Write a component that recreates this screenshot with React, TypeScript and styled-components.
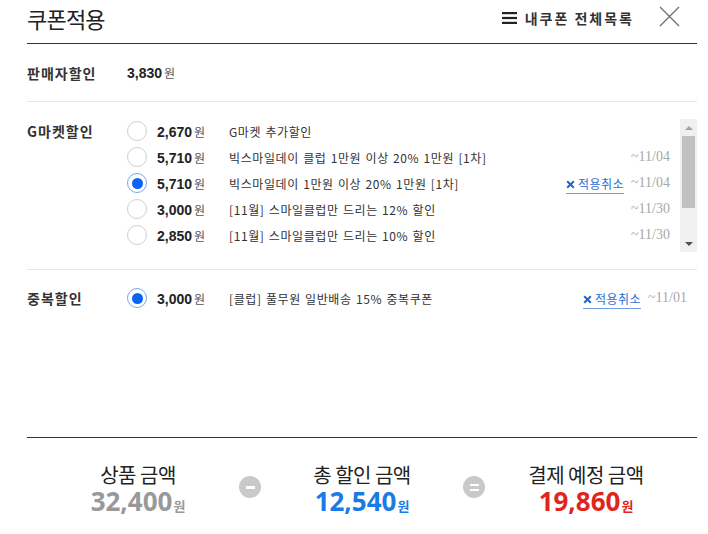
import React from 'react';
import styled, { createGlobalStyle } from 'styled-components';

const GlobalStyle = createGlobalStyle`
  html, body { margin: 0; padding: 0; background: #fff; }
  body { font-family: "Noto Sans CJK KR", "Noto Sans", sans-serif; color: #222; }
  * { box-sizing: border-box; }
`;

const Page = styled.div`
  width: 708px;
  height: 534px;
  padding: 0 11px 0 27px;
  display: flex;
  flex-direction: column;
`;

const Header = styled.header`
  height: 44px;
  padding-bottom: 7px;
  display: flex;
  align-items: center;
  justify-content: space-between;
  border-bottom: 1px solid #333;
`;

const Title = styled.h1`
  margin: 0;
  font-size: 22px;
  font-weight: 400;
  line-height: 36px;
  letter-spacing: -0.8px;
  color: #222;
`;

const HeaderActions = styled.div`
  display: flex;
  align-items: center;
  gap: 25px;
  padding-right: 17px;
`;

const MyCoupons = styled.a`
  display: flex;
  align-items: center;
  gap: 8px;
  font-size: 14px;
  font-weight: 700;
  letter-spacing: 2px;
  line-height: 20px;
  color: #333;
`;

const CloseButton = styled.button`
  border: 0;
  padding: 0;
  background: none;
  display: flex;
  margin-top: -4px;
`;

const Section = styled.section<{ $pad: string; $grow?: boolean; $last?: boolean; $align?: string }>`
  display: flex;
  align-items: ${(p) => p.$align || 'flex-start'};
  padding: ${(p) => p.$pad};
  border-bottom: ${(p) => (p.$last ? 'none' : '1px solid #e8e8e8')};
  flex: ${(p) => (p.$grow ? '1' : 'none')};
`;

const SellerSection = styled(Section)`
  height: 58px;
`;

const Label = styled.div`
  width: 100px;
  flex: none;
  font-size: 14px;
  font-weight: 700;
  letter-spacing: 1px;
  line-height: 26px;
  color: #333;
`;

const Amount = styled.span`
  width: 72px;
  flex: none;
  font-family: "Liberation Sans", Arial, sans-serif;
  font-weight: 700;
  font-size: 14px;
  color: #222;
  white-space: nowrap;
`;

const Won = styled.span`
  font-family: "Noto Sans CJK KR", sans-serif;
  font-weight: 400;
  font-size: 12px;
  color: #555;
  margin-left: 2px;
`;

const ListBox = styled.div`
  flex: 1;
  display: flex;
  align-items: flex-start;
`;

const List = styled.ul`
  flex: 1;
  margin: 0;
  padding: 0;
  list-style: none;
  display: flex;
  flex-direction: column;
`;

const Row = styled.li`
  height: 26px;
  display: flex;
  align-items: center;
  padding-right: 10px;
`;

const Radio = styled.span<{ $checked?: boolean }>`
  width: 20px;
  height: 20px;
  flex: none;
  margin-right: 10px;
  border-radius: 50%;
  border: 1px solid ${(p) => (p.$checked ? '#7aa6ea' : '#cfcfcf')};
  background: #fff;
  display: flex;
  align-items: center;
  justify-content: center;
  &::after {
    content: '';
    width: 11px;
    height: 11px;
    border-radius: 50%;
    background: ${(p) => (p.$checked ? '#0b63f6' : 'transparent')};
  }
`;

const Desc = styled.span`
  flex: 1;
  min-width: 0;
  font-size: 12px;
  letter-spacing: 0.6px;
  word-spacing: 1px;
  color: #333;
  white-space: nowrap;
  overflow: hidden;
`;

const Cancel = styled.a`
  display: inline-flex;
  align-items: center;
  gap: 3px;
  margin: 4px 7px 0 0;
  padding-bottom: 1px;
  font-size: 12px;
  line-height: 16px;
  letter-spacing: 0.5px;
  color: #2a6fd6;
  border-bottom: 1px solid #6f9ee3;
  white-space: nowrap;
`;

const DateText = styled.span`
  font-family: "Liberation Serif", "Times New Roman", serif;
  font-size: 14px;
  color: #a8a8a8;
  white-space: nowrap;
`;

const ScrollBar = styled.div`
  width: 17px;
  height: 133px;
  margin-top: 1px;
  flex: none;
  background: #f0f0f0;
  display: flex;
  flex-direction: column;
`;

const ScrollBtn = styled.span<{ $down?: boolean }>`
  height: 17px;
  flex: none;
  display: flex;
  align-items: center;
  justify-content: center;
  &::before {
    content: '';
    border-left: 4px solid transparent;
    border-right: 4px solid transparent;
    ${(p) => (p.$down ? 'border-top: 4px solid #505050;' : 'border-bottom: 4px solid #a3a3a3;')}
  }
`;

const Thumb = styled.span`
  height: 72px;
  margin: 0 2px;
  background: #c1c1c1;
`;

const Track = styled.span`
  flex: 1;
`;

const Summary = styled.footer`
  height: 97px;
  flex: none;
  border-top: 1px solid #333;
  padding: 26px 10px 0;
  display: grid;
  grid-template-columns: 1fr 22px 1fr 22px 1fr;
  align-items: start;
`;

const SumCol = styled.div`
  display: flex;
  flex-direction: column;
  align-items: center;
`;

const SumLabel = styled.div`
  font-size: 20px;
  line-height: 22px;
  letter-spacing: -0.5px;
  color: #222;
`;

const SumValue = styled.div<{ $color: string }>`
  margin-top: 1px;
  font-family: "Open Sans", "Liberation Sans", sans-serif;
  font-weight: 700;
  font-size: 26px;
  line-height: 28px;
  color: ${(p) => p.$color};
`;

const SumWon = styled.span`
  font-family: "Noto Sans CJK KR", sans-serif;
  font-size: 13px;
  font-weight: 700;
  margin-left: 1px;
`;

const Operator = styled.span<{ $equals?: boolean }>`
  width: 22px;
  height: 22px;
  margin-top: 12px;
  border-radius: 50%;
  background: #c9c9c9;
  display: flex;
  flex-direction: column;
  align-items: center;
  justify-content: center;
  gap: 3px;
  &::before,
  &::after {
    content: '';
    width: 9px;
    height: ${(p) => (p.$equals ? '2px' : '3px')};
    background: #fff;
  }
  &::after {
    display: ${(p) => (p.$equals ? 'block' : 'none')};
  }
`;

const HamburgerIcon = () => (
  <svg width="15" height="12" viewBox="0 0 15 12">
    <rect x="0" y="0" width="15" height="2.2" fill="#222" />
    <rect x="0" y="4.9" width="15" height="2.2" fill="#222" />
    <rect x="0" y="9.8" width="15" height="2.2" fill="#222" />
  </svg>
);

const CloseIcon = () => (
  <svg width="21" height="21" viewBox="0 0 21 21">
    <path d="M1 1 L20 20 M20 1 L1 20" stroke="#6f6f6f" strokeWidth="1.3" fill="none" />
  </svg>
);

const XMark = () => (
  <svg width="9" height="9" viewBox="0 0 9 9">
    <path d="M1.2 1.2 L7.8 7.8 M7.8 1.2 L1.2 7.8" stroke="#1f64cf" strokeWidth="2" fill="none" />
  </svg>
);

type Coupon = { amount: string; desc: string; date?: string; checked?: boolean };

const gmarket: Coupon[] = [
  { amount: '2,670', desc: 'G마켓 추가할인' },
  { amount: '5,710', desc: '빅스마일데이 클럽 1만원 이상 20% 1만원 [1차]', date: '~11/04' },
  { amount: '5,710', desc: '빅스마일데이 1만원 이상 20% 1만원 [1차]', date: '~11/04', checked: true },
  { amount: '3,000', desc: '[11월] 스마일클럽만 드리는 12% 할인', date: '~11/30' },
  { amount: '2,850', desc: '[11월] 스마일클럽만 드리는 10% 할인', date: '~11/30' },
];

const dup: Coupon[] = [
  { amount: '3,000', desc: '[클럽] 풀무원 일반배송 15% 중복쿠폰', date: '~11/01', checked: true },
];

const CouponRow = ({ c }: { c: Coupon }) => (
  <Row>
    <Radio $checked={c.checked} />
    <Amount>
      {c.amount}
      <Won>원</Won>
    </Amount>
    <Desc>{c.desc}</Desc>
    {c.checked && (
      <Cancel>
        <XMark />
        적용취소
      </Cancel>
    )}
    {c.date && <DateText>{c.date}</DateText>}
  </Row>
);

export default function App() {
  return (
    <>
      <GlobalStyle />
      <Page>
        <Header>
          <Title>쿠폰적용</Title>
          <HeaderActions>
            <MyCoupons>
              <HamburgerIcon />
              내쿠폰 전체목록
            </MyCoupons>
            <CloseButton aria-label="닫기">
              <CloseIcon />
            </CloseButton>
          </HeaderActions>
        </Header>

        <SellerSection $pad="0" $align="center">
          <Label>판매자할인</Label>
          <Amount>
            3,830<Won>원</Won>
          </Amount>
        </SellerSection>

        <Section $pad="16px 0 17px">
          <Label>G마켓할인</Label>
          <ListBox>
            <List>
              {gmarket.map((c, i) => (
                <CouponRow key={i} c={c} />
              ))}
            </List>
            <ScrollBar>
              <ScrollBtn />
              <Thumb />
              <Track />
              <ScrollBtn $down />
            </ScrollBar>
          </ListBox>
        </Section>

        <Section $pad="15px 0 0" $grow $last>
          <Label>중복할인</Label>
          <List>
            {dup.map((c, i) => (
              <CouponRow key={i} c={c} />
            ))}
          </List>
        </Section>

        <Summary>
          <SumCol>
            <SumLabel>상품 금액</SumLabel>
            <SumValue $color="#999">
              32,400<SumWon>원</SumWon>
            </SumValue>
          </SumCol>
          <Operator />
          <SumCol>
            <SumLabel>총 할인 금액</SumLabel>
            <SumValue $color="#1a7be6">
              12,540<SumWon>원</SumWon>
            </SumValue>
          </SumCol>
          <Operator $equals />
          <SumCol>
            <SumLabel>결제 예정 금액</SumLabel>
            <SumValue $color="#e0261c">
              19,860<SumWon>원</SumWon>
            </SumValue>
          </SumCol>
        </Summary>
      </Page>
    </>
  );
}
